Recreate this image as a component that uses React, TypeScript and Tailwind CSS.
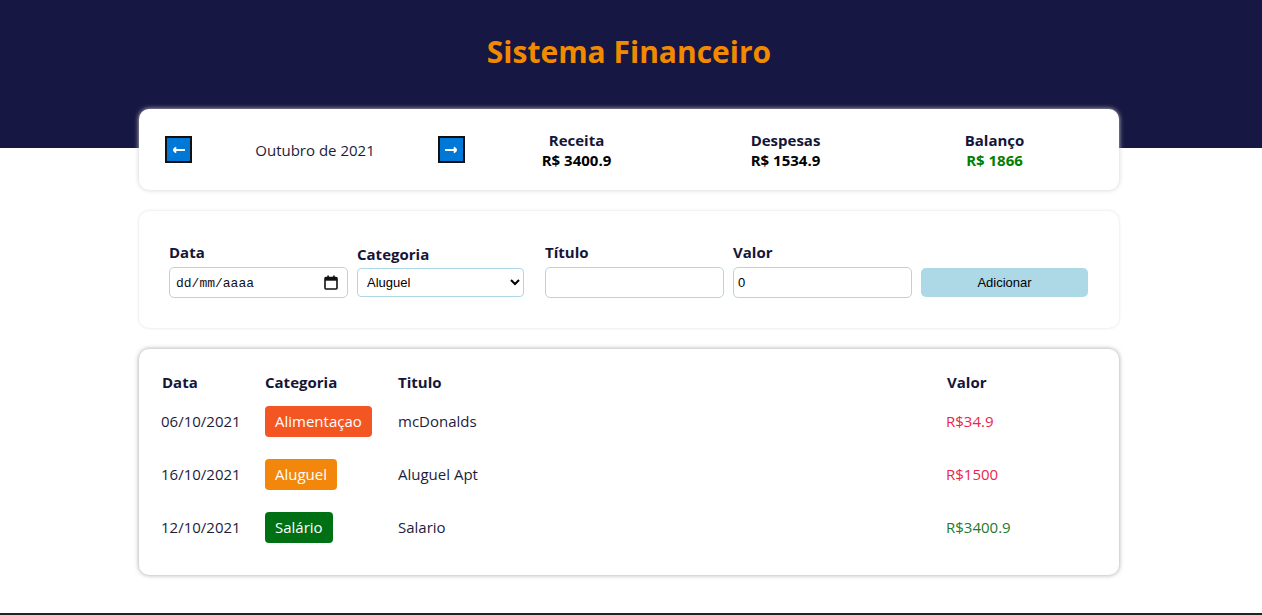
import { useState } from "react";

type Item = {
  date: string;
  category: string;
  title: string;
  value: number;
  expense: boolean;
};

const categories: Record<string, string> = {
  Alimentaçao: "bg-[#f35623]",
  Aluguel: "bg-[#f2870b]",
  Salário: "bg-[#007014]",
};

const items: Item[] = [
  { date: "06/10/2021", category: "Alimentaçao", title: "mcDonalds", value: 34.9, expense: true },
  { date: "16/10/2021", category: "Aluguel", title: "Aluguel Apt", value: 1500, expense: true },
  { date: "12/10/2021", category: "Salário", title: "Salario", value: 3400.9, expense: false },
];

const CalendarIcon = () => (
  <svg width="14" height="15" viewBox="0 0 14 15" fill="none">
    <rect x="1" y="2.5" width="12" height="11.5" rx="1" stroke="#111" strokeWidth="1.6" />
    <rect x="1" y="2.5" width="12" height="3.2" fill="#111" />
    <rect x="3.3" y="0.5" width="1.6" height="3" fill="#111" />
    <rect x="9.1" y="0.5" width="1.6" height="3" fill="#111" />
  </svg>
);

const ArrowButton = ({ dir }: { dir: "left" | "right" }) => (
  <button className="w-[27px] h-[27px] bg-[#0078d7] border-2 border-[#111] grid place-items-center">
    <svg width="14" height="8" viewBox="0 0 14 8">
      {dir === "left" ? (
        <path d="M1.5 4h11.5M1.5 4l2.6-2.6M1.5 4l2.6 2.6" stroke="#fff" strokeWidth="2" fill="none" />
      ) : (
        <path d="M1 4h11.5M12.5 4l-2.6-2.6M12.5 4l-2.6 2.6" stroke="#fff" strokeWidth="2" fill="none" />
      )}
    </svg>
  </button>
);

const InfoCard = () => (
  <div className="bg-white rounded-[10px] shadow-[0_0_5px_#cfcfcf] h-[81px] flex items-center pl-[26px] pr-[20px]">
    <div className="w-[300px] flex items-center justify-between">
      <ArrowButton dir="left" />
      <span className="text-[15px] text-[#1c1c40] mt-[2px]">Outubro de 2021</span>
      <ArrowButton dir="right" />
    </div>
    <div className="flex-1 grid grid-cols-3 ml-[7px]">
      {[
        { label: "Receita", value: "R$ 3400.9", color: "text-black" },
        { label: "Despesas", value: "R$ 1534.9", color: "text-black" },
        { label: "Balanço", value: "R$ 1866", color: "text-[#008000]" },
      ].map((r) => (
        <div key={r.label} className="flex flex-col items-center font-bold text-[15px] leading-[20px]">
          <span className="text-[#15153a]">{r.label}</span>
          <span className={r.color}>{r.value}</span>
        </div>
      ))}
    </div>
  </div>
);

const FormCard = () => {
  const [cat, setCat] = useState("Aluguel");
  return (
    <div className="bg-white rounded-[10px] shadow-[0_0_3px_#dcdcdc] pt-[31px] pb-[30px] pl-[30px]">
      <div className="flex gap-[9px] items-end">
        <label className="w-[179px] flex flex-col">
          <span className="font-bold text-[15px] leading-[20px] text-[#15153a] mb-[5px]">Data</span>
          <div className="h-[31px] border border-[#add8e6] rounded-[5px] flex items-center justify-between pl-[6px] pr-[9px] text-[13px] text-[#111] font-['Liberation_Mono',monospace]">
            <span className="mt-[2px]">dd/mm/aaaa</span>
            <CalendarIcon />
          </div>
        </label>
        <label className="w-[179px] flex flex-col">
          <span className="font-bold text-[15px] leading-[20px] text-[#15153a] mb-[4px]">Categoria</span>
          <select
            value={cat}
            onChange={(e) => setCat(e.target.value)}
            className="w-[167px] h-[29px] mb-[1px] border border-[#add8e6] rounded-[4px] px-[5px] text-[13px] text-black font-['Liberation_Sans',Arial,sans-serif]"
          >
            <option>Alimentaçao</option>
            <option>Aluguel</option>
            <option>Salário</option>
          </select>
        </label>
        <label className="w-[179px] flex flex-col">
          <span className="font-bold text-[15px] leading-[20px] text-[#15153a] mb-[5px]">Título</span>
          <input className="h-[31px] border border-[#add8e6] rounded-[5px] px-[4px] text-[13px] font-['Liberation_Sans',Arial,sans-serif]" />
        </label>
        <label className="w-[179px] flex flex-col">
          <span className="font-bold text-[15px] leading-[20px] text-[#15153a] mb-[5px]">Valor</span>
          <input
            defaultValue="0"
            className="h-[31px] border border-[#add8e6] rounded-[5px] px-[4px] text-[13px] text-black font-['Liberation_Sans',Arial,sans-serif]"
          />
        </label>
        <button className="w-[167px] h-[29px] mb-[1px] bg-[#add8e6] rounded-[5px] text-[13px] text-black font-['Liberation_Sans',Arial,sans-serif]">
          Adicionar
        </button>
      </div>
    </div>
  );
};

const TableCard = () => (
  <div className="bg-white rounded-[10px] shadow-[0_0_5px_#a0a0a0] pt-[21px] pb-[21px] px-[22px] text-[15px] text-[#1c1c40]">
    <div className="grid grid-cols-[104px_133px_1fr_151px] h-[25px] items-center font-bold text-[#15153a]">
      <span className="pl-[1px]">Data</span>
      <span>Categoria</span>
      <span>Titulo</span>
      <span className="pl-[1px]">Valor</span>
    </div>
    {items.map((it) => (
      <div key={it.date} className="grid grid-cols-[104px_133px_1fr_151px] h-[53px] items-center">
        <span>{it.date}</span>
        <span>
          <span className={`inline-block ${categories[it.category]} text-white rounded-[4px] px-[10px] h-[31px] leading-[31px]`}>
            {it.category}
          </span>
        </span>
        <span>{it.title}</span>
        <span className={it.expense ? "text-[#e8264c]" : "text-[#1f7a2a]"}>R${it.value}</span>
      </div>
    ))}
  </div>
);

export default function App() {
  return (
    <div className="h-[615px] border-b-2 border-[#222] font-['Open_Sans','Noto_Sans',sans-serif] bg-[linear-gradient(to_bottom,#171743_148px,#fff_148px)]">
      <div className="pt-[34px] pr-[4px] flex flex-col items-center">
        <h1 className="text-[30px] leading-[36px] font-bold text-[#f28a00]">Sistema Financeiro</h1>
        <div className="w-[980px] mt-[39px] flex flex-col gap-[21px]">
          <InfoCard />
          <FormCard />
          <TableCard />
        </div>
      </div>
    </div>
  );
}
